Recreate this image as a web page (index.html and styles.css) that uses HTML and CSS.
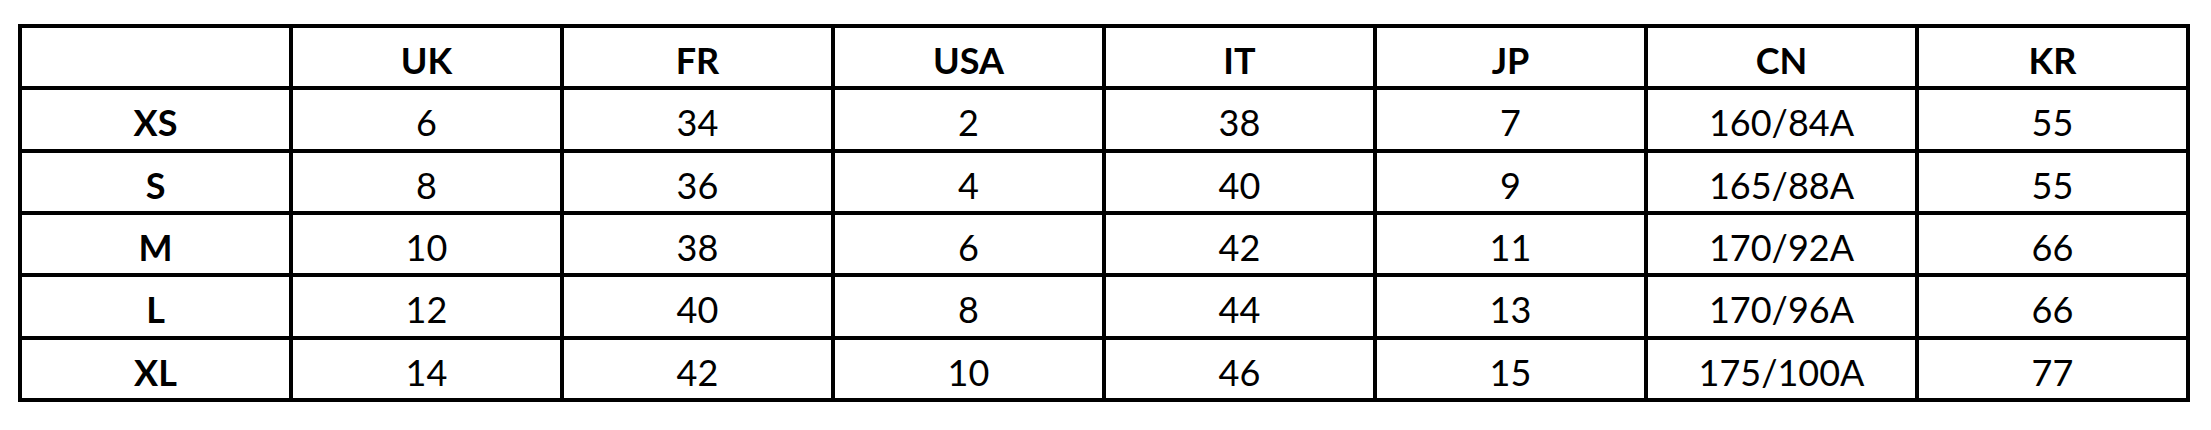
FILE: index.html
```html
<!DOCTYPE html>
<html lang="en">
<head>
<meta charset="utf-8">
<title>Size chart</title>
<link rel="stylesheet" href="styles.css">
</head>
<body>
<div class="page">
  <table class="size-chart">
    <thead>
      <tr>
        <th></th>
        <th>UK</th>
        <th>FR</th>
        <th>USA</th>
        <th>IT</th>
        <th>JP</th>
        <th>CN</th>
        <th>KR</th>
      </tr>
    </thead>
    <tbody>
      <tr>
        <th>XS</th><td>6</td><td>34</td><td>2</td><td>38</td><td>7</td><td>160/84A</td><td>55</td>
      </tr>
      <tr>
        <th>S</th><td>8</td><td>36</td><td>4</td><td>40</td><td>9</td><td>165/88A</td><td>55</td>
      </tr>
      <tr>
        <th>M</th><td>10</td><td>38</td><td>6</td><td>42</td><td>11</td><td>170/92A</td><td>66</td>
      </tr>
      <tr>
        <th>L</th><td>12</td><td>40</td><td>8</td><td>44</td><td>13</td><td>170/96A</td><td>66</td>
      </tr>
      <tr>
        <th>XL</th><td>14</td><td>42</td><td>10</td><td>46</td><td>15</td><td>175/100A</td><td>77</td>
      </tr>
    </tbody>
  </table>
</div>
</body>
</html>
```

FILE: styles.css
```css
html, body {
  margin: 0;
  padding: 0;
  background: #fff;
}

.page {
  padding: 24px 0 0 18px;
}

.size-chart {
  width: 2172px;
  table-layout: fixed;
  border-collapse: separate;
  border-spacing: 4px;
  background: #000;
  font-family: "Lato", "Open Sans", "Liberation Sans", sans-serif;
  font-size: 36px;
  color: #000;
}

.size-chart tr {
  height: 58.33px;
}

.size-chart th,
.size-chart td {
  background: #fff;
  text-align: center;
  vertical-align: middle;
  padding: 6px 0 0 0;
  line-height: 1;
  font-weight: 400;
}

.size-chart th {
  font-weight: 700;
}
```
